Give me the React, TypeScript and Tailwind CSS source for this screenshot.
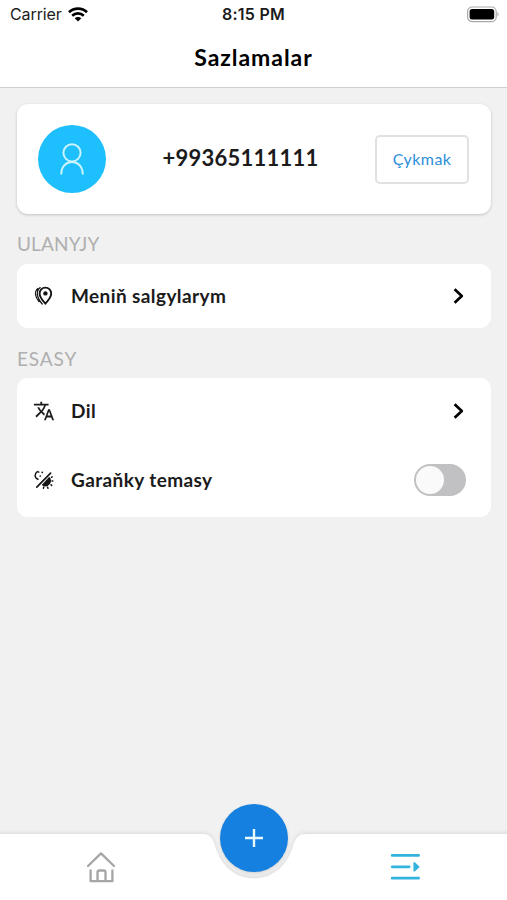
import type { ReactNode } from 'react';
import { MdTranslate } from 'react-icons/md';

function StatusBar() {
  return (
    <div className="grid h-[28px] grid-cols-3 items-center pl-[10px] pr-[8px] font-['Inter',sans-serif] text-[#1c1c1c]">
      <div className="flex items-center gap-[6px]">
        <span className="text-[16px] leading-[20px] tracking-[-0.1px]">Carrier</span>
        <svg width="20" height="15" viewBox="0 0 20 15" fill="none" stroke="#000" strokeWidth="2.6">
          <path d="M1 5.3C6 .4 14 .4 19 5.3" />
          <path d="M4.2 8.7C7.4 5.6 12.6 5.6 15.8 8.7" />
          <path d="M10 14.6 6.7 11.2C8.5 9.5 11.5 9.5 13.3 11.2Z" fill="#000" stroke="none" />
        </svg>
      </div>
      <span className="pr-[2px] text-center text-[16px] font-semibold leading-[20px] tracking-[0.25px]">8:15 PM</span>
      <svg className="justify-self-end" width="33" height="17" viewBox="0 0 33 17">
        <rect x="1.6" y="1" width="28.6" height="14.6" rx="4.5" fill="#fff" stroke="#aaa" strokeWidth="1.2" />
        <rect x="3.6" y="3" width="24.6" height="10.6" rx="2.5" fill="#000" />
        <path d="M31.4 6v4.6c1.6-.8 1.6-3.8 0-4.6Z" fill="#aaa" />
      </svg>
    </div>
  );
}

function PinIcon() {
  return (
    <svg width="22" height="22" viewBox="0 0 22 22" fill="none" stroke="#151515" strokeWidth="1.9" strokeLinecap="round">
      <path d="M12.4 2.6a5.8 5.8 0 0 1 5.8 6c0 3.6-3.3 7.4-5.8 10.1-2.5-2.7-5.8-6.5-5.8-10.1a5.8 5.8 0 0 1 5.8-6Z" />
      <circle cx="12.4" cy="8.4" r="2.2" fill="#151515" stroke="none" />
      <path strokeWidth="1.3" d="M7.2 2.6C2.6 6 3.6 12.4 9.2 19M4.6 3.6C1.2 7 2.2 12.2 6 16.6" />
    </svg>
  );
}

function ThemeIcon() {
  return (
    <svg width="22" height="22" viewBox="0 0 22 22" fill="none" stroke="#151515" strokeLinecap="round">
      <path strokeWidth="1.7" d="M3.8 18.2 17.6 4.2" />
      <path strokeWidth="1.5" d="M4.4 2.6C1.2 4.8 1.3 8.8 5 10.3" />
      <path strokeWidth="1.7" d="M9.2 3.3h.1M7.2 7h.1M5.6 3h.1" />
      <path fill="#151515" stroke="none" d="M16.3 7.8a5.4 5.4 0 0 1-.4 8.3 5.4 5.4 0 0 1-7.2-.2Z" />
      <path strokeWidth="1.5" d="M18.5 8.3l.7-.4M19 12h.8M18 15.8l.7.6M14.6 18.2l.4 1.1M10.7 18.2l-.3 1" />
    </svg>
  );
}

function Chevron() {
  return (
    <svg width="12" height="18" viewBox="0 0 12 18" fill="none" stroke="#000" strokeWidth="2.7" strokeLinejoin="round">
      <path d="M1.6 2.3 8.8 9 1.6 15.7" />
    </svg>
  );
}

function Row({ icon, label, action }: { icon: ReactNode; label: ReactNode; action: ReactNode }) {
  return (
    <div className="flex items-center justify-between pl-[16px]">
      <div className="flex items-center gap-[16px]">
        {icon}
        {label}
      </div>
      {action}
    </div>
  );
}

export default function App() {
  return (
    <div className="flex h-[900px] w-[507px] flex-col overflow-hidden bg-[#f1f1f1] font-['Lato','Open_Sans',sans-serif] text-[#1b1b1b]">
      <header className="h-[88px] border-b border-[#cecece] bg-white">
        <StatusBar />
        <h1 className="mt-[13px] text-center text-[23px] font-bold leading-[32px] tracking-[0.95px] text-black">Sazlamalar</h1>
      </header>

      <main className="flex-1 pl-[17px] pr-[16px] pt-[16px]">
        <section className="flex h-[110px] items-center justify-between rounded-[11px] bg-white pl-[21px] pr-[22px] shadow-[0_1px_3px_rgba(0,0,0,0.2)]">
          <div className="flex size-[68px] items-center justify-center rounded-full bg-[#1dbffc]">
            <svg width="26" height="34" viewBox="0 0 26 34" fill="none" stroke="#c9f4ff" strokeWidth="2" strokeLinecap="round">
              <circle cx="13" cy="10.8" r="8.6" />
              <path d="M2.3 31.8C2.3 16 23.7 16 23.7 31.8" />
            </svg>
          </div>
          <span className="mb-[3px] text-[22px] font-bold leading-[28px] tracking-[0.25px]">+99365111111</span>
          <button className="h-[49px] w-[94px] rounded-[5px] border-2 border-[#e0e1e3] text-[16px] tracking-[0.45px] text-[#2d8fda]">Çykmak</button>
        </section>

        <h2 className="mt-[18px] text-[19px] leading-[24px] tracking-[0.15px] text-[#afafaf]">ULANYJY</h2>
        <section className="mt-[8px] grid h-[64px] rounded-[11px] bg-white pr-[26px]">
          <Row icon={<PinIcon />} label={<span className="text-[19px] font-bold leading-[26px] tracking-[0.4px]">Meniň salgylarym</span>} action={<Chevron />} />
        </section>

        <h2 className="mt-[19px] text-[19px] leading-[24px] tracking-[0.9px] text-[#afafaf]">ESASY</h2>
        <section className="mt-[7px] grid h-[139px] grid-rows-2 rounded-[11px] bg-white">
          <div className="grid pb-[3px] pr-[26px]">
            <Row icon={<MdTranslate size={22} />} label={<span className="text-[19px] font-bold leading-[26px] tracking-[0.4px]">Dil</span>} action={<Chevron />} />
          </div>
          <div className="grid pb-[4px] pr-[25px]">
            <Row
              icon={<ThemeIcon />}
              label={<span className="text-[19px] font-bold leading-[26px] tracking-[0.4px]">Garaňky temasy</span>}
              action={
                <span className="flex h-[32px] w-[52px] items-center rounded-full bg-[#c1c1c3] p-[2px]">
                  <span className="size-[28px] rounded-full bg-[#fafafa]" />
                </span>
              }
            />
          </div>
        </section>
      </main>

      <nav className="relative grid h-[66px] grid-cols-[202px_103px_202px] justify-items-center">
        <svg className="absolute -top-[6px] left-0" width="507" height="72" viewBox="0 0 507 72">
          <defs>
            <filter id="bar-shadow" x="-5%" y="-20%" width="110%" height="140%">
              <feDropShadow dx="0" dy="-1" stdDeviation="2" floodColor="#000" floodOpacity="0.1" />
            </filter>
          </defs>
          <path filter="url(#bar-shadow)" fill="#fff" d="M-10 6H202Q211 6 214 15C219 36 234 50.5 254 50.5S289 36 294 15Q297 6 306 6H517V82H-10Z" />
        </svg>
        <svg className="relative mt-[17px]" width="30" height="34" viewBox="0 0 30 34" fill="none" stroke="#a5a5a5" strokeWidth="2.3" strokeLinecap="round" strokeLinejoin="round">
          <path d="M2 15 15 2.4 28 15M4.6 19.5v10.7h21.8V19.5M11.5 30v-8.5q0-2 2-2h4q2 0 2 2V30" />
        </svg>
        <button className="relative -mt-[30px] flex size-[68px] items-center justify-center rounded-full bg-[#1580df] shadow-[0_1px_3px_rgba(0,0,0,0.14)]">
          <svg width="20" height="20" viewBox="0 0 20 20" stroke="#e9fbff" strokeWidth="2.4">
            <path d="M1 10h18M10 1v18" />
          </svg>
        </button>
        <svg className="relative mt-[18px]" width="32" height="30" viewBox="0 0 32 30" fill="none" stroke="#34b4dd" strokeWidth="2.8" strokeLinecap="round">
          <path d="M2.2 3.4h26.4M2.2 14.8h17M2.2 26.2h26.4" />
          <path d="M24.2 10.8v8l4.4-4Z" fill="#34b4dd" strokeWidth="1.6" strokeLinejoin="round" />
        </svg>
      </nav>
    </div>
  );
}
